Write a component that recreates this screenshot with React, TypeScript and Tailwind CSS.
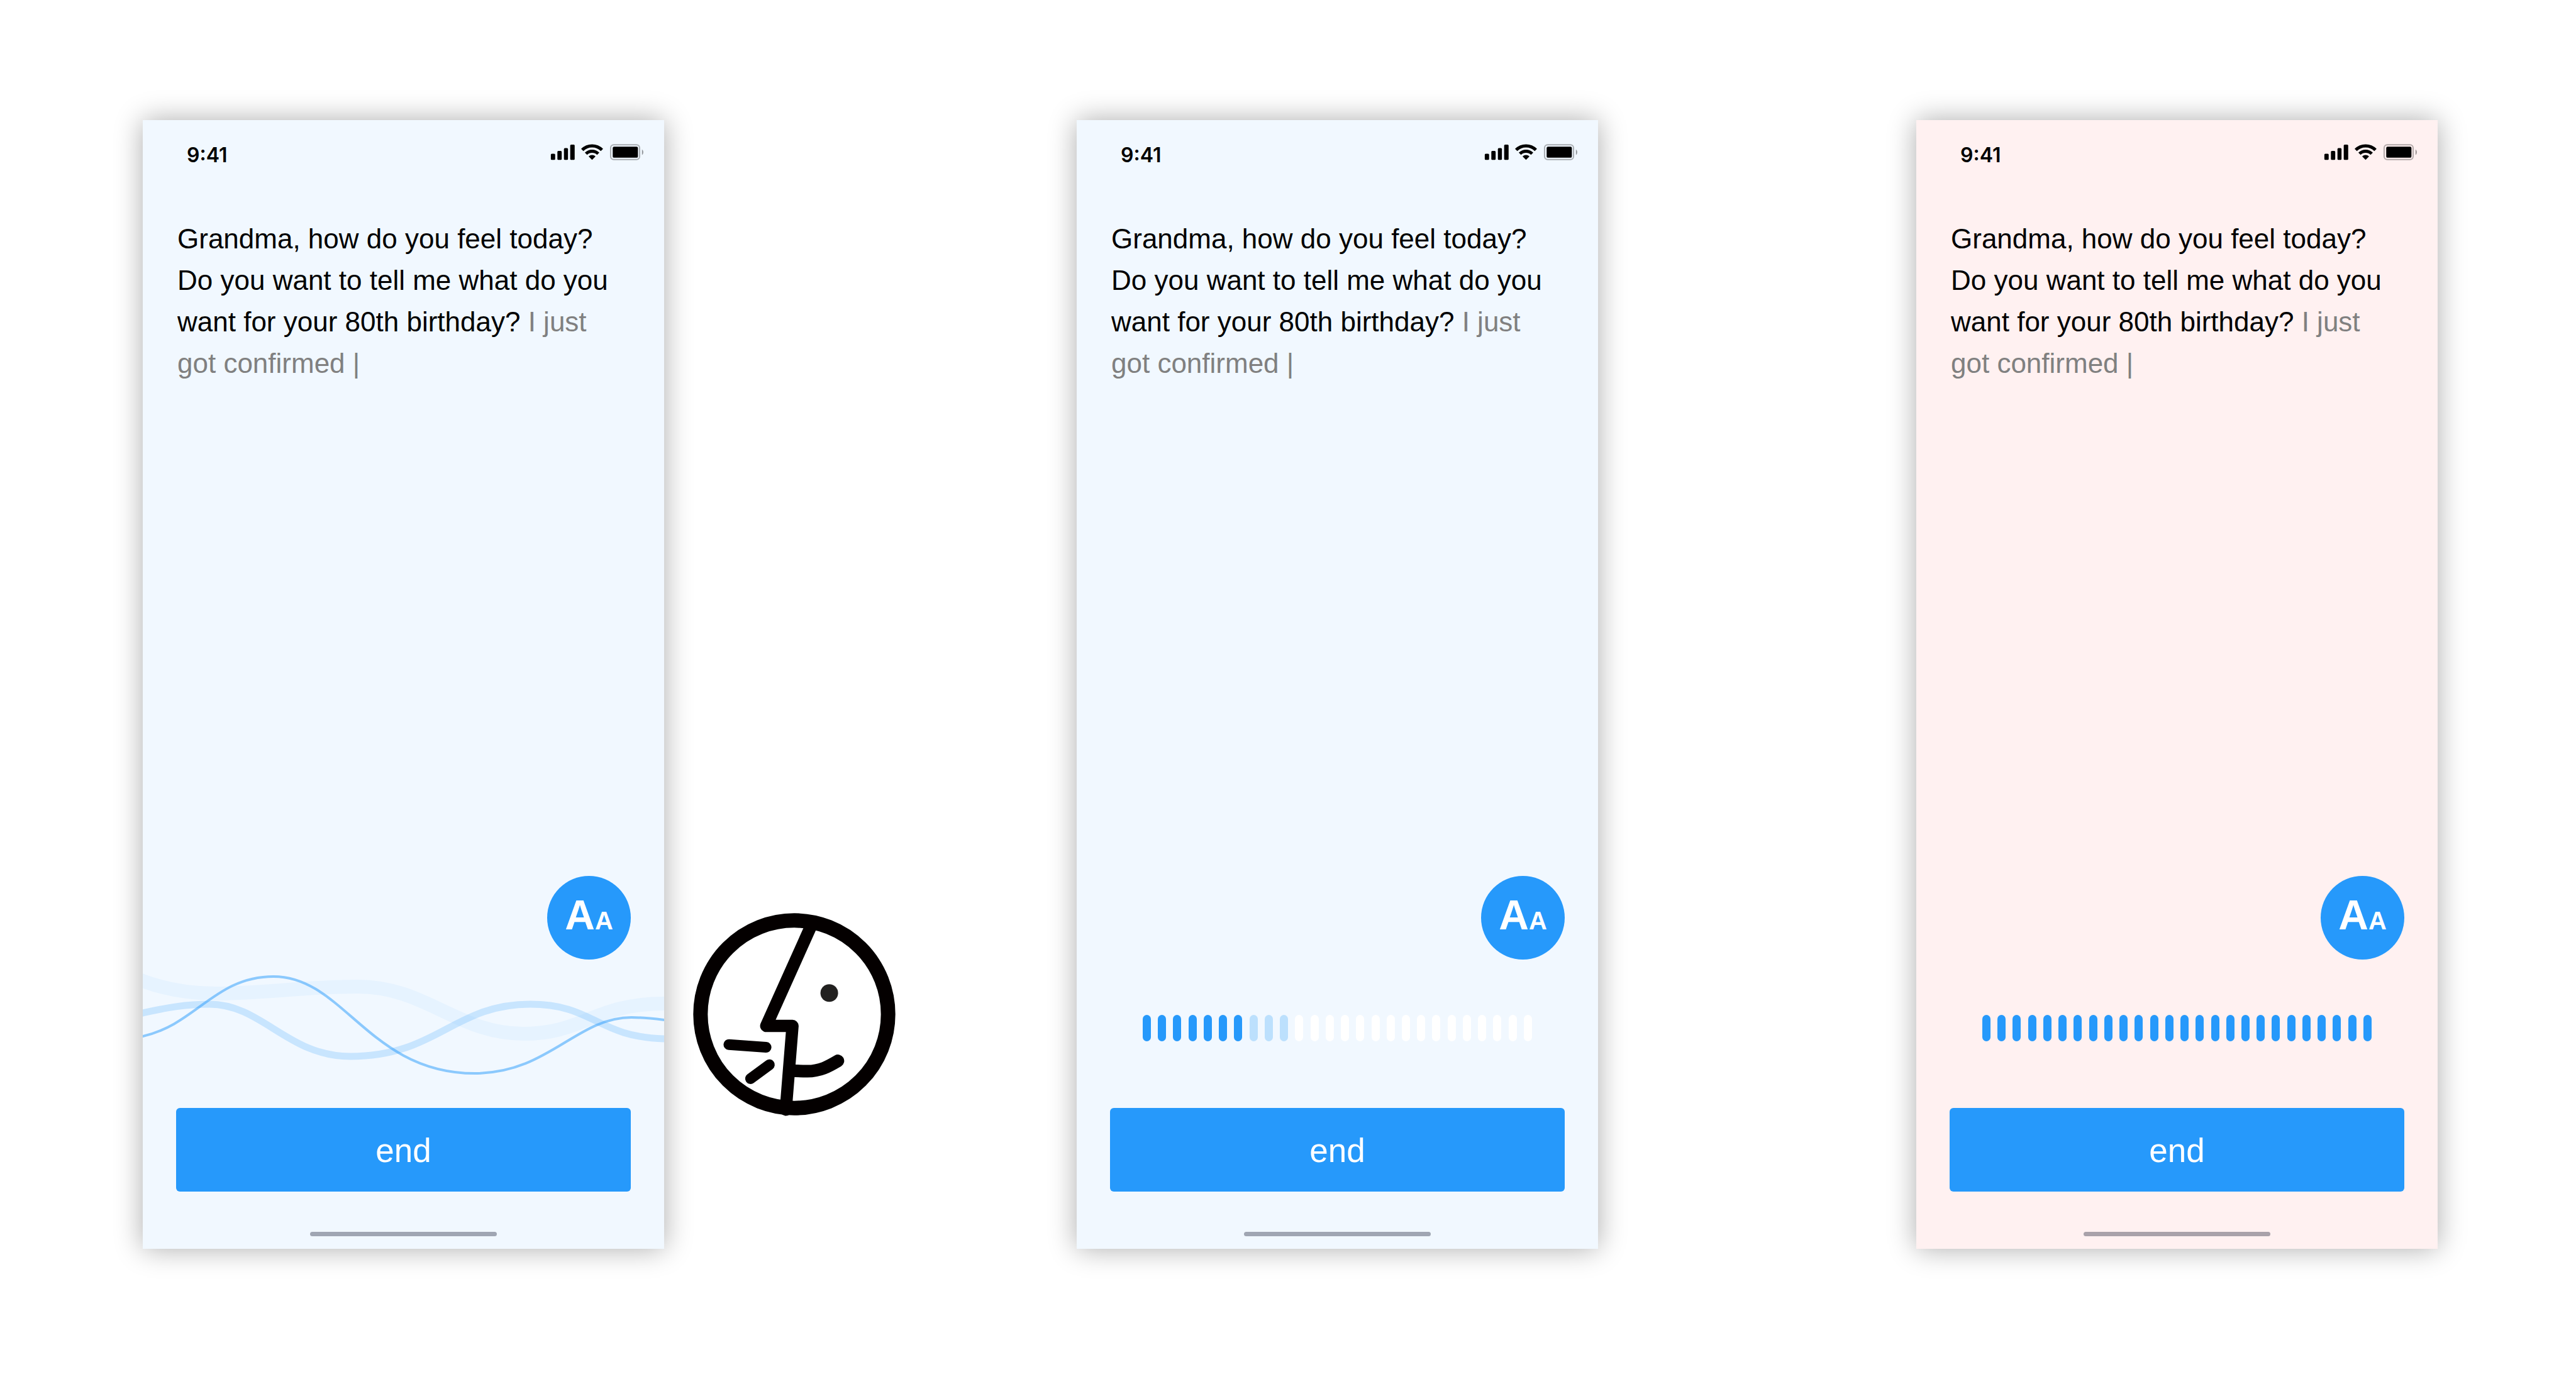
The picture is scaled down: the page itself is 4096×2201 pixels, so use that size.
import React from "react";

function StatusIcons() {
  return (
    <svg viewBox="77 72 668 116" className="h-[26px] w-[148px] shrink-0" role="img" aria-label="Signal, Wi-Fi and battery">
      <rect x="81" y="141" width="31" height="44" rx="7" />
      <rect x="128" y="121" width="31" height="64" rx="7" />
      <rect x="175" y="101" width="29" height="84" rx="7" />
      <rect x="220" y="76" width="32" height="109" rx="7" />
      <g fill="none" stroke="#000" strokeWidth="23">
        <path d="M306.300 114.300 A100 100 0 0 1 447.700 114.300" />
        <path d="M333.200 141.200 A62 62 0 0 1 420.800 141.200" />
      </g>
      <path d="M377 185 L352.200 160.200 A35 35 0 0 1 401.800 160.200 Z" />
      <rect x="510" y="77" width="208" height="106" rx="22" fill="none" stroke="#000" strokeOpacity="0.3" strokeWidth="9" />
      <rect x="525" y="91" width="181" height="79" rx="10" />
      <path d="M735 110 Q745 117 745 130 Q745 143 735 150 Z" fillOpacity="0.4" />
    </svg>
  );
}

function Waves() {
  return (
    <svg viewBox="0 0 829 176" className="mt-[19px] mb-[41px] w-full" fill="none" stroke="#2699fb" aria-hidden="true">
      <path d="M-12 10 L0 15 C35 28 70 35 115 35 C190 35 260 24 342 24 C450 24 500 99 606 99 C700 99 720 51 829 51 H841" strokeWidth="22" strokeOpacity="0.05" />
      <path d="M-12 69 L0 66 C40 57 70 52 106 52 C190 52 230 135 330 135 C468 135 494 52 616 52 C717 52 722 104 829 107 H841" strokeWidth="11" strokeOpacity="0.2" />
      <path d="M-12 106 L0 103 C85 84 115 8 208 8 C320 8 360 162 528 162 C645 162 690 73 777 73 C795 73 812 75 829 77 L841 78" strokeWidth="4" strokeOpacity="0.5" />
    </svg>
  );
}

const BAR_COUNT = 26;

function LevelBars({ full, fading }: { full: number; fading: number }) {
  return (
    <div className="mt-[88px] mb-[106px] flex justify-between px-[105px]" aria-hidden="true">
      {Array.from({ length: BAR_COUNT }, (_, i) => (
        <span
          key={i}
          className={
            i < full
              ? "h-[42px] w-[13px] rounded-full bg-[#2699fb]"
              : i < full + fading
                ? "h-[42px] w-[13px] rounded-full bg-[#bce0fd]"
                : "h-[42px] w-[13px] rounded-full bg-white"
          }
        />
      ))}
    </div>
  );
}

function Phone({ tint, children }: { tint: string; children: React.ReactNode }) {
  return (
    <section className={`flex flex-col pb-5 shadow-[0_0_42px_rgba(0,0,0,0.33)] ${tint}`}>
      <header className="flex items-start justify-between pt-[38px] pr-[33px] pl-[70px]">
        <time className="font-['Inter'] text-[32px] leading-[36px] font-semibold">9:41</time>
        <StatusIcons />
      </header>
      <p className="mt-[82px] flex-1 pr-[64px] pl-[55px] text-[44px] leading-[66px]">
        Grandma, how do you feel today? Do you want to tell me what do you want for your 80th birthday?{" "}
        <span className="text-[#808080]">I just got confirmed |</span>
      </p>
      <div className="flex justify-end px-[53px]">
        <button
          type="button"
          aria-label="Text size"
          className="flex size-[133px] items-baseline justify-center rounded-full bg-[#2699fb] pt-[22px] font-bold text-white"
        >
          <span className="text-[66px] leading-[80px]">A</span>
          <span className="text-[40px] leading-[80px]">A</span>
        </button>
      </div>
      {children}
      <div className="px-[53px]">
        <button type="button" className="h-[133px] w-full rounded-md bg-[#2699fb] pt-[3px] text-[53px] text-white">
          end
        </button>
      </div>
      <div className="mt-16 h-[7px] w-[297px] self-center rounded-sm bg-[#161a32]/37" />
    </section>
  );
}

function FaceLogo() {
  return (
    <svg
      viewBox="100 90 1364 1370"
      className="mb-[210px] ml-[45px] w-[324px] self-end"
      fill="none"
      stroke="#040000"
      strokeLinecap="round"
      strokeLinejoin="round"
      role="img"
      aria-label="Face in profile, speaking"
    >
      <circle cx="782" cy="772" r="628" strokeWidth="97" />
      <path d="M900 168 L594 850 H770 L725 1411" strokeWidth="82" />
      <path d="M760 1149 C800 1152 850 1153 870 1153 C955 1153 1010 1122 1074 1084" strokeWidth="84" />
      <path d="M344 975 L593 993 M489 1203 L615 1110" strokeWidth="72" />
      <circle cx="1016" cy="630" r="59" fill="#222120" stroke="none" />
    </svg>
  );
}

export default function App() {
  return (
    <main className="grid min-h-screen grid-cols-[227fr_829fr_656fr_829fr_506fr_829fr_220fr] bg-white pt-[191px] pb-[215px] font-['Liberation_Sans',Arial,sans-serif] text-black">
      <div />
      <Phone tint="bg-[#f1f8ff]">
        <Waves />
      </Phone>
      <FaceLogo />
      <Phone tint="bg-[#f1f8ff]">
        <LevelBars full={7} fading={3} />
      </Phone>
      <div />
      <Phone tint="bg-[#fff1f1]">
        <LevelBars full={26} fading={0} />
      </Phone>
      <div />
    </main>
  );
}
